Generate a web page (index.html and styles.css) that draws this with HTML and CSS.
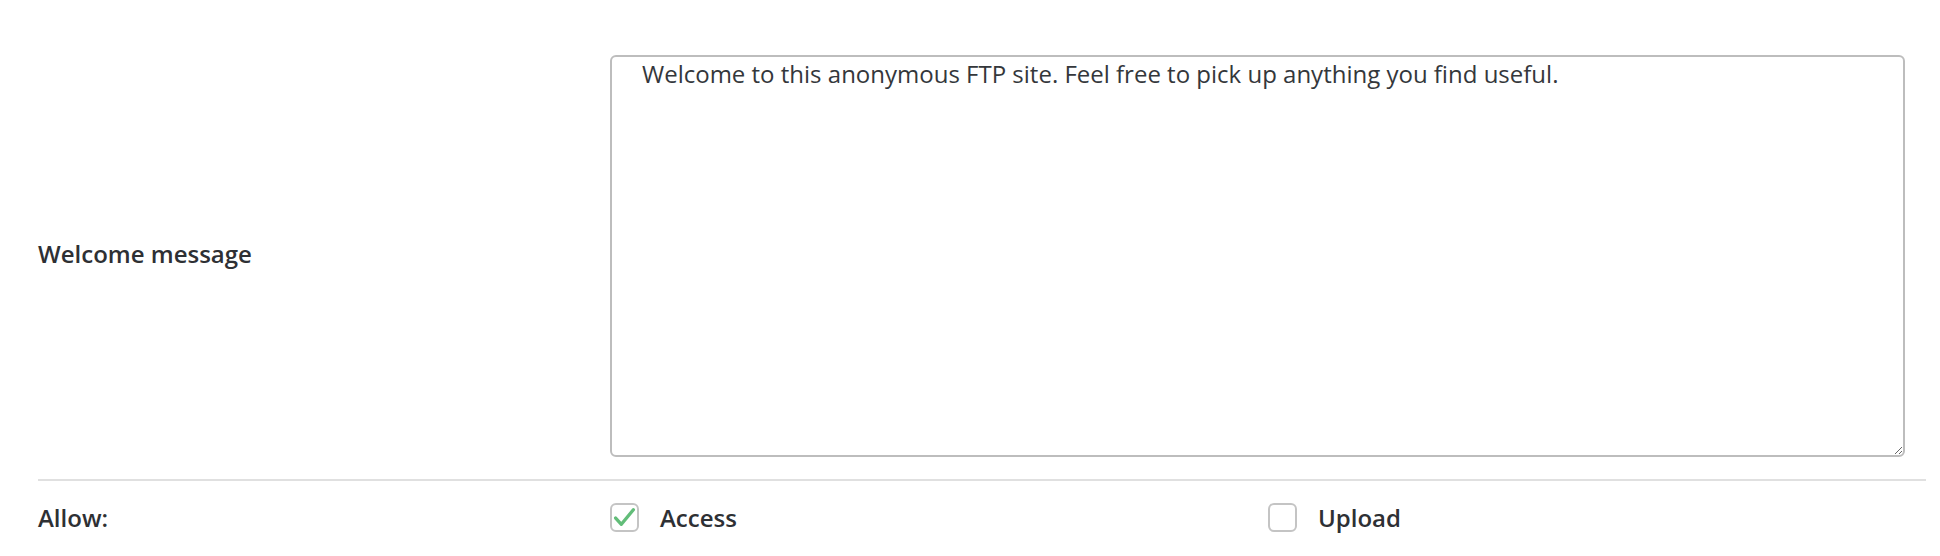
FILE: index.html
```html
<!DOCTYPE html>
<html lang="en">
<head>
<meta charset="utf-8">
<title>FTP settings</title>
<link rel="stylesheet" href="styles.css">
</head>
<body>
<form class="settings">
  <div class="row row-message">
    <label class="label" for="welcome">Welcome message</label>
    <div class="field">
      <textarea id="welcome" class="message">Welcome to this anonymous FTP site. Feel free to pick up anything you find useful.</textarea>
    </div>
  </div>
  <div class="row row-allow">
    <div class="label">Allow:</div>
    <div class="field options">
      <label class="option">
        <span class="box checked">
          <svg viewBox="0 0 24 24" width="25" height="25"><path d="M3.5 12.5 L9 18.5 L20.5 4.5" fill="none" stroke="#62bd79" stroke-width="3.2" stroke-linecap="round" stroke-linejoin="round"/></svg>
        </span>
        <span class="option-text">Access</span>
      </label>
      <label class="option">
        <span class="box"></span>
        <span class="option-text">Upload</span>
      </label>
    </div>
  </div>
</form>
</body>
</html>
```

FILE: styles.css
```css
html, body {
  margin: 0;
  padding: 0;
  background: #ffffff;
}

body {
  font-family: "Open Sans", "Noto Sans", sans-serif;
  color: #2e3034;
}

.settings {
  margin: 0 14px 0 38px;
  padding-top: 55px;
}

.row {
  display: grid;
  grid-template-columns: 572px 1fr;
  align-items: center;
}

.label {
  font-size: 24px;
  font-weight: 600;
  color: #2e3034;
}

.row-message {
  padding-bottom: 22px;
}

.row-message .label {
  margin-bottom: 5px;
}

.message {
  display: block;
  box-sizing: border-box;
  width: 1295px;
  height: 402px;
  margin: 0;
  padding: 0 30px;
  border: 2px solid #bdbdbd;
  border-radius: 6px;
  font-family: "Open Sans", "Noto Sans", sans-serif;
  font-size: 24px;
  color: #34373b;
  background: #fff;
  resize: both;
  outline: none;
}

.row-allow {
  border-top: 2px solid #e0e0e0;
  padding-top: 20px;
  padding-bottom: 20px;
}

.options {
  display: grid;
  grid-template-columns: 1fr 1fr;
}

.option {
  display: flex;
  align-items: center;
  gap: 21px;
  font-size: 24px;
  font-weight: 600;
  color: #2e3034;
}

.box {
  box-sizing: border-box;
  width: 29px;
  height: 29px;
  border: 2px solid #c4c4c4;
  border-radius: 6px;
  display: flex;
  align-items: center;
  justify-content: center;
  background: #fff;
}
```
